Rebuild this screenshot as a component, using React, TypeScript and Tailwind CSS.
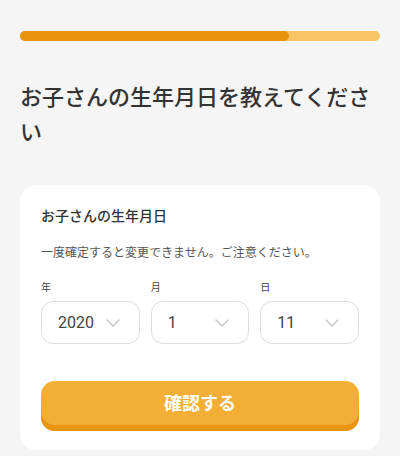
import { JSX } from "react";

const Chevron = (): JSX.Element => (
  <svg width="14" height="8" viewBox="0 0 14 8" fill="none" className="absolute right-[19px] top-1/2 -translate-y-1/2">
    <polyline points="1,1 7,7 13,1" stroke="#c9c9c9" strokeWidth="1.6" strokeLinecap="round" strokeLinejoin="round" />
  </svg>
);

const fields = [
  { label: "年", value: "2020" },
  { label: "月", value: "1" },
  { label: "日", value: "11" },
];

const App = (): JSX.Element => {
  return (
    <div className="h-[456px] w-[400px] overflow-hidden bg-[#f5f5f5] px-5 font-['Roboto','Noto_Sans_CJK_JP',sans-serif] text-[#333]">
      <div className="mt-[31px] flex h-[10px] rounded-full bg-[#f8c465]">
        <div className="h-full w-[269px] rounded-full bg-[#e8940f]" />
      </div>
      <h1 className="mt-[39px] text-[22px] leading-[35px] font-medium text-[#333]">
        お子さんの生年月日を教えてください
      </h1>
      <div className="mt-[35px] rounded-[16px] bg-white px-[21px] pt-[21px] pb-[19px]">
        <div className="text-[14px] leading-[20px] font-medium text-[#333]">お子さんの生年月日</div>
        <p className="mt-[18px] text-[12px] leading-[18px] text-[#555]">
          一度確定すると変更できません。ご注意ください。
        </p>
        <div className="mt-[19px] grid grid-cols-3 gap-[11px]">
          {fields.map((f) => (
            <div key={f.label}>
              <div className="text-[10px] leading-[14px] text-[#444]">{f.label}</div>
              <div className="relative mt-[6px] flex h-[43px] items-center rounded-[12px] border border-[#dedede] pl-[16px] text-[16px] text-[#444]">
                {f.value}
                <Chevron />
              </div>
            </div>
          ))}
        </div>
        <button className="mt-[37px] flex h-[50px] w-full items-center justify-center rounded-[14px] bg-[#f2ae35] pb-[6px] text-[18px] font-bold text-white shadow-[inset_0_-6px_0_#e8940f]">
          確認する
        </button>
      </div>
    </div>
  );
};

export default App;
